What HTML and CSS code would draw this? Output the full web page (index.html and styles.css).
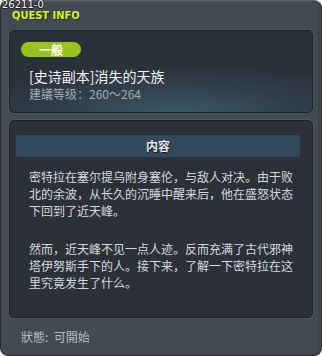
FILE: index.html
```html
<!DOCTYPE html>
<html lang="zh">
<head>
    <meta charset="UTF-8">
    <title>Quest Info</title>
    <link rel="stylesheet" href="styles.css">
</head>
<body>

    <div class="window">
        <div class="quest-id">26211-0</div>
        <div class="window-title">QUEST INFO</div>

        <!-- quest summary -->
        <div class="panel summary">
            <span class="badge">一般</span>
            <div class="quest-name">[史诗副本]消失的天族</div>
            <div class="quest-level">建議等级：260～264</div>
        </div>

        <!-- quest description -->
        <div class="panel content">
            <div class="content-head">内容</div>
            <p>密特拉在塞尔提乌附身塞伦，与敌人对决。由于败北的余波，从长久的沉睡中醒来后，他在盛怒状态下回到了近天峰。</p>
            <p>然而，近天峰不见一点人迹。反而充满了古代邪神塔伊努斯手下的人。接下来，了解一下密特拉在这里究竟发生了什么。</p>
        </div>

        <div class="status">狀態:&nbsp; 可開始</div>
    </div>

</body>
</html>
```

FILE: styles.css
```css
body {
    margin: 0;
    background: #ffffff;
    font-family: "Noto Sans CJK SC", "DejaVu Sans", sans-serif;
}
.window {
    position: relative;
    width: 322px;
    height: 356px;
    box-sizing: border-box;
    padding: 29px 8px 0 8px;
    background: #434a52;
    border: 1px solid #2b3036;
    border-top-color: #5b636b;
    border-radius: 8px;
    box-shadow: inset -3px 0 0 #3d444b, inset 0 1px 0 #4c545c;
}
.quest-id {
    position: absolute;
    left: 1px;
    top: -1px;
    font-family: "DejaVu Sans", sans-serif;
    font-size: 10px;
    line-height: 10px;
    color: #ffffff;
    text-shadow: 1px 0 0 #1a1d20, -1px 0 0 #1a1d20, 0 1px 0 #1a1d20, 0 -1px 0 #1a1d20;
}
.window-title {
    position: absolute;
    left: 11px;
    top: 9px;
    font-family: "DejaVu Sans Condensed", "DejaVu Sans", sans-serif;
    font-weight: bold;
    font-size: 11px;
    line-height: 11px;
    color: #d7f02c;
    text-shadow: 1px 1px 0 #2a3010;
}
.panel {
    box-sizing: border-box;
    border: 1px solid #1d2227;
    border-radius: 5px;
    box-shadow: 0 0 0 1px #4d555d;
}
.summary {
    height: 83px;
    padding: 11px 12px 0 11px;
    background: radial-gradient(ellipse 70% 60% at 55% 100%, #3b5866 0%, #313f4b 55%, #2b313b 100%);
}
.badge {
    display: block;
    width: 60px;
    height: 15px;
    line-height: 15px;
    border-radius: 8px;
    background: #99c21b;
    color: #ffffff;
    font-size: 12px;
    font-weight: bold;
    text-align: center;
}
.quest-name {
    margin: 10px 0 0 8px;
    font-size: 14px;
    line-height: 18px;
    color: #f2f4f5;
}
.quest-level {
    margin: 1px 0 0 8px;
    font-size: 12px;
    line-height: 16px;
    color: #a3abb2;
}
.content {
    margin-top: 7px;
    height: 198px;
    padding: 14px 17px 0 6px;
    background: #2c3139;
}
.content-head {
    height: 22px;
    line-height: 22px;
    margin-right: -5px;
    border-radius: 3px;
    background: #31495a;
    color: #e6eaec;
    font-size: 12px;
    font-weight: bold;
    text-align: center;
    text-shadow: 1px 1px 0 #151a1e;
}
.content p {
    margin: 11px 0 0 13px;
    font-size: 12px;
    line-height: 17px;
    color: #d5dadd;
}
.content p + p {
    margin-top: 21px;
}
.status {
    margin: 11px 0 0 12px;
    font-size: 12px;
    line-height: 16px;
    color: #b6bdc3;
}
```
